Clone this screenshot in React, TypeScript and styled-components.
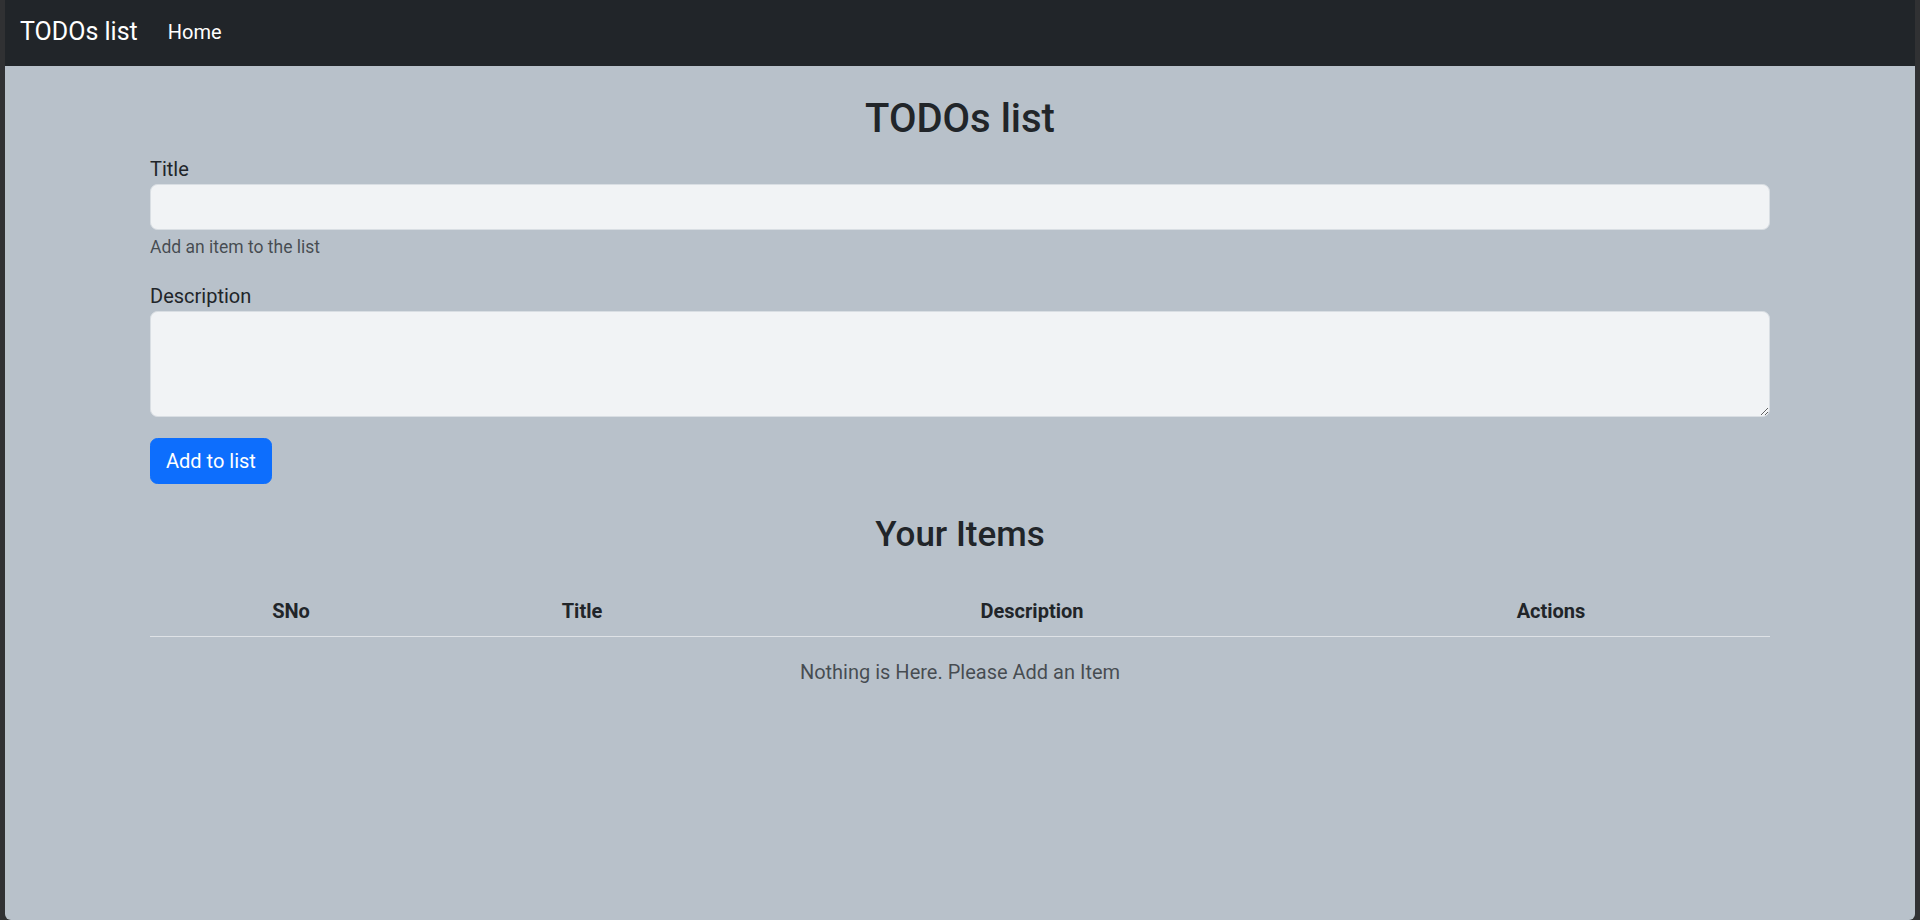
import React from "react";
import styled, { createGlobalStyle } from "styled-components";

const GlobalStyle = createGlobalStyle`
  *, *::before, *::after { box-sizing: border-box; }
  html, body { margin: 0; padding: 0; }
  body {
    background: #303133;
    font-family: Roboto, "Liberation Sans", Arial, sans-serif;
    color: #212529;
    -webkit-font-smoothing: antialiased;
  }
`;

const Window = styled.div`
  margin: 0 5px;
  height: 920px;
  background: #b8c1ca;
  border-radius: 0 0 6px 6px;
  overflow: hidden;
  display: flex;
  flex-direction: column;
`;

const Navbar = styled.nav`
  height: 66px;
  flex: 0 0 66px;
  background: #212529;
  display: flex;
  align-items: center;
  padding: 0 15px;
`;

const Brand = styled.a`
  color: #fff;
  font-size: 25px;
  line-height: 37.5px;
  margin-right: 20px;
  margin-top: -2px;
  text-decoration: none;
`;

const NavLink = styled.a<{ $active?: boolean }>`
  color: ${(p) => (p.$active ? "#fff" : "rgba(255,255,255,0.55)")};
  font-size: 20px;
  line-height: 30px;
  padding: 0 10px;
  margin-top: -3px;
  text-decoration: none;
`;

const Main = styled.main`
  width: 1620px;
  margin: 0 auto;
  padding-top: 29px;
`;

const PageTitle = styled.h2`
  margin: 0 0 11px;
  font-size: 40px;
  line-height: 48px;
  font-weight: 500;
  text-align: center;
`;

const Field = styled.div<{ $gap: number }>`
  margin-bottom: ${(p) => p.$gap}px;
`;

const Label = styled.label`
  display: block;
  font-size: 20px;
  line-height: 30px;
`;

const TextInput = styled.input`
  display: block;
  width: 100%;
  height: 46px;
  padding: 7px 15px;
  font: inherit;
  font-size: 20px;
  color: #212529;
  background: #f1f3f5;
  border: 1px solid #d9dee3;
  border-radius: 7.5px;
  outline: none;
`;

const TextArea = styled.textarea`
  display: block;
  width: 100%;
  height: 106px;
  padding: 7px 15px;
  font: inherit;
  font-size: 20px;
  color: #212529;
  background: #f1f3f5;
  border: 1px solid #d9dee3;
  border-radius: 7.5px;
  outline: none;
  resize: vertical;
`;

const HelpText = styled.div`
  margin-top: 4px;
  font-size: 17.5px;
  line-height: 26px;
  color: rgba(33, 37, 41, 0.75);
`;

const PrimaryButton = styled.button`
  display: inline-block;
  height: 46px;
  padding: 0 15px;
  font: inherit;
  font-size: 20px;
  line-height: 30px;
  color: #fff;
  background: #0d6efd;
  border: 1px solid #0d6efd;
  border-radius: 7.5px;
  cursor: pointer;
`;

const SectionTitle = styled.h3`
  margin: 30px 0 30px;
  font-size: 35px;
  line-height: 42px;
  font-weight: 500;
  text-align: center;
`;

const Table = styled.table`
  width: 100%;
  border-collapse: collapse;
  table-layout: fixed;
`;

const HeadCell = styled.th`
  padding: 10px;
  font-size: 20px;
  line-height: 30px;
  font-weight: 700;
  text-align: center;
  color: #212529;
  border-bottom: 1px solid #dee2e6;
`;

const EmptyMessage = styled.p`
  margin: 20px 0 0;
  font-size: 20px;
  line-height: 30px;
  text-align: center;
  color: rgba(33, 37, 41, 0.75);
`;

const columns = [
  { label: "SNo", width: 282 },
  { label: "Title", width: 300 },
  { label: "Description", width: 600 },
  { label: "Actions", width: 438 },
];

export default function App() {
  return (
    <>
      <GlobalStyle />
      <Window>
        <Navbar>
          <Brand href="#">TODOs list</Brand>
          <NavLink href="#" $active>
            Home
          </NavLink>
        </Navbar>
        <Main>
          <PageTitle>TODOs list</PageTitle>
          <Field $gap={21}>
            <Label htmlFor="title">Title</Label>
            <TextInput id="title" type="text" />
            <HelpText>Add an item to the list</HelpText>
          </Field>
          <Field $gap={21}>
            <Label htmlFor="desc">Description</Label>
            <TextArea id="desc" rows={3} />
          </Field>
          <PrimaryButton type="button">Add to list</PrimaryButton>
          <SectionTitle>Your Items</SectionTitle>
          <Table>
            <colgroup>
              {columns.map((c) => (
                <col key={c.label} style={{ width: c.width }} />
              ))}
            </colgroup>
            <thead>
              <tr>
                {columns.map((c) => (
                  <HeadCell key={c.label} scope="col">
                    {c.label}
                  </HeadCell>
                ))}
              </tr>
            </thead>
          </Table>
          <EmptyMessage>Nothing is Here. Please Add an Item</EmptyMessage>
        </Main>
      </Window>
    </>
  );
}
